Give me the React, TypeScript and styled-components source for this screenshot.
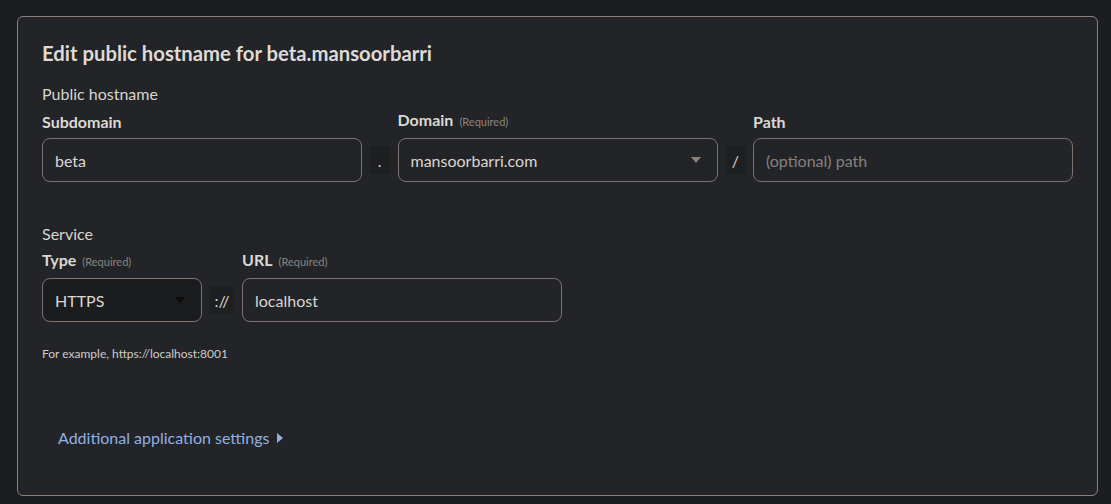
import React from 'react';
import styled, { createGlobalStyle } from 'styled-components';

const GlobalStyle = createGlobalStyle`
  html, body {
    margin: 0;
    padding: 0;
    background: #1c1d1f;
    font-family: Lato, "Noto Sans", sans-serif;
    color: #dedad6;
  }
`;

const Page = styled.div`
  padding: 16px 13px 9px 17px;
  width: 1111px;
  height: 504px;
  box-sizing: border-box;
`;

const Card = styled.section`
  background: #232427;
  border: 1px solid #8a7f79;
  border-radius: 6px;
  height: 480px;
  box-sizing: border-box;
  padding: 22px 24px 0 24px;
  display: flex;
  flex-direction: column;
`;

const Title = styled.h2`
  margin: 0;
  font-size: 20.3px;
  line-height: 28px;
  font-weight: 700;
  color: #dedad6;
`;

const SectionLabel = styled.div<{ $top: number }>`
  margin-top: ${p => p.$top}px;
  font-size: 16px;
  line-height: 20px;
  color: #d8d4d0;
`;

const Row = styled.div`
  display: flex;
  align-items: flex-end;
  gap: 8px;
  margin-top: 6px;
`;

const Field = styled.div`
  display: flex;
  flex-direction: column;
  gap: 6px;
`;

const Label = styled.div`
  display: flex;
  align-items: baseline;
  gap: 6px;
  font-size: 16px;
  line-height: 20px;
  font-weight: 700;
  color: #dcd8d4;
`;

const Required = styled.span`
  font-size: 11px;
  font-weight: 400;
  color: #8a8580;
`;

const Input = styled.div<{ $width: number; $dark?: boolean; $placeholder?: boolean }>`
  width: ${p => p.$width}px;
  height: 44px;
  box-sizing: border-box;
  border: 1px solid #7e736e;
  border-radius: 8px;
  background: ${p => (p.$dark ? '#1b1c1e' : 'transparent')};
  padding: 0 12px;
  display: flex;
  align-items: center;
  justify-content: space-between;
  font-size: 16px;
  color: ${p => (p.$placeholder ? '#85817d' : '#dad6d2')};
`;

const Arrow = styled.span<{ $color: string }>`
  width: 0;
  height: 0;
  border-left: 5px solid transparent;
  border-right: 5px solid transparent;
  border-top: 6px solid ${p => p.$color};
  margin-right: 4px;
`;

const Sep = styled.div<{ $width: number }>`
  width: ${p => p.$width}px;
  height: 28px;
  margin-bottom: 8px;
  background: #1e1f21;
  display: flex;
  align-items: center;
  justify-content: center;
  font-size: 16px;
  color: #d8d4d0;
`;

const Hint = styled.div`
  margin-top: 24px;
  font-size: 12px;
  line-height: 16px;
  color: #cfcbc7;
`;

const MoreLink = styled.button`
  margin-top: 66px;
  margin-left: 16px;
  padding: 0;
  background: none;
  border: none;
  align-self: flex-start;
  display: flex;
  align-items: center;
  gap: 8px;
  font-family: inherit;
  font-size: 16px;
  line-height: 20px;
  color: #8fb1e3;
  cursor: pointer;
`;

const Caret = styled.span`
  width: 0;
  height: 0;
  border-top: 5px solid transparent;
  border-bottom: 5px solid transparent;
  border-left: 6px solid #8fb1e3;
`;

export default function App() {
  return (
    <>
      <GlobalStyle />
      <Page>
        <Card>
          <Title>Edit public hostname for beta.mansoorbarri</Title>

          <SectionLabel $top={17}>Public hostname</SectionLabel>
          <Row>
            <Field>
              <Label>Subdomain</Label>
              <Input $width={320}>beta</Input>
            </Field>
            <Sep $width={20}>.</Sep>
            <Field>
              <Label>
                Domain <Required>(Required)</Required>
              </Label>
              <Input $width={320}>
                mansoorbarri.com
                <Arrow $color="#8a7f79" />
              </Input>
            </Field>
            <Sep $width={20}>/</Sep>
            <Field>
              <Label>Path</Label>
              <Input $width={320} $placeholder>
                (optional) path
              </Input>
            </Field>
          </Row>

          <SectionLabel $top={42}>Service</SectionLabel>
          <Row>
            <Field>
              <Label>
                Type <Required>(Required)</Required>
              </Label>
              <Input $width={160} $dark>
                HTTPS
                <Arrow $color="#0c0c0d" />
              </Input>
            </Field>
            <Sep $width={24}>://</Sep>
            <Field>
              <Label>
                URL <Required>(Required)</Required>
              </Label>
              <Input $width={320}>localhost</Input>
            </Field>
          </Row>

          <Hint>For example, https://localhost:8001</Hint>

          <MoreLink>
            Additional application settings
            <Caret />
          </MoreLink>
        </Card>
      </Page>
    </>
  );
}
